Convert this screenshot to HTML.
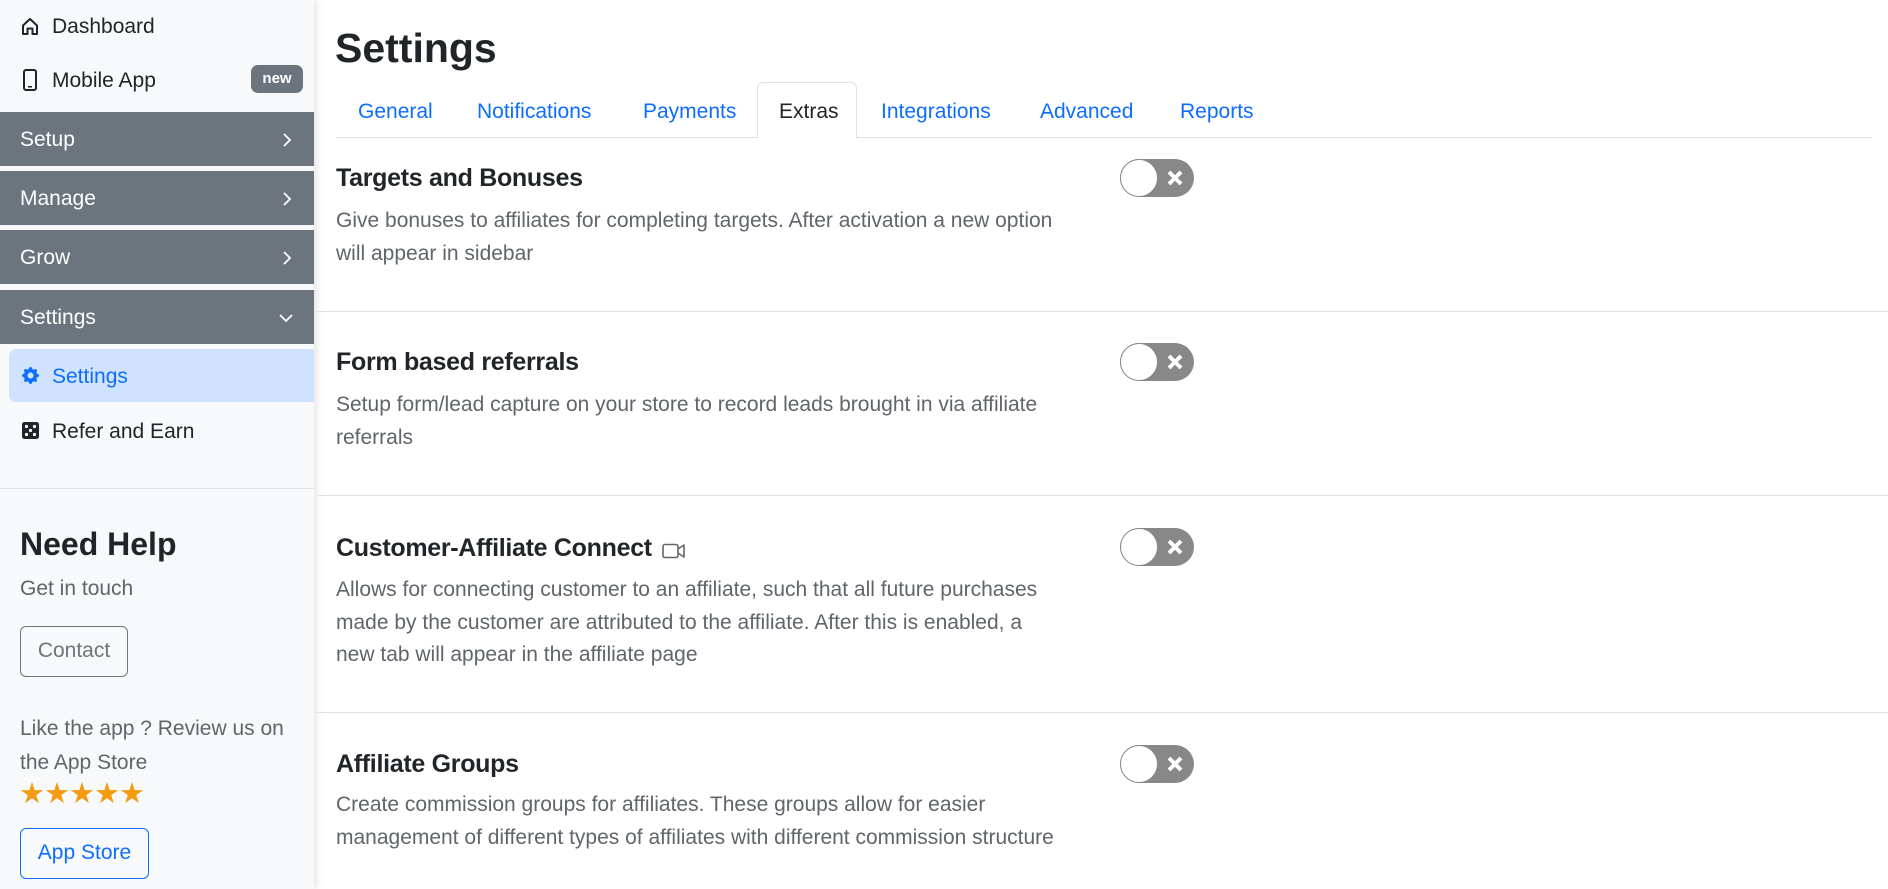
<!DOCTYPE html>
<html><head><meta charset="utf-8"><style>
*{margin:0;padding:0;box-sizing:border-box}
body{width:1888px;height:889px;overflow:hidden;background:#fff;font-family:"Liberation Sans",sans-serif;position:relative;color:#212529}
.a{position:absolute;white-space:nowrap}
#sb{position:absolute;left:0;top:0;width:314px;height:889px;background:#f8f9fa;box-shadow:2px 0 8px rgba(0,0,0,.12)}
.bar{position:absolute;left:0;width:314px;height:54px;background:#6c757d;color:#fff;font-size:21px;line-height:56px;padding-left:20px}
.bar svg{position:absolute;right:22px;top:20px}
.nav{font-size:21px;color:#212529}
.tab{position:absolute;top:100px;font-size:21px;color:#0d6efd}
.t{position:absolute;left:336px;font-size:25px;font-weight:bold;color:#212529;letter-spacing:-0.3px}
.d{position:absolute;left:336px;width:724px;font-size:21px;line-height:32.5px;color:#60656b}
.hr{position:absolute;left:317px;right:0;height:1px;background:#dee2e6}
.tg{position:absolute;left:1120px;width:74px;height:38px;border-radius:19px;background:#888}
.tg:before{content:"";position:absolute;left:0;top:0;width:38px;height:38px;border-radius:50%;background:#fff;border:1.5px solid #8a8a8a;box-sizing:border-box}
.tg svg{position:absolute;left:46px;top:11px}
</style></head><body>
<div id="sb">
 <svg class="a" style="left:21px;top:17px" width="18" height="19" viewBox="0 0 18 19"><path d="M2 8.5L9 2l7 6.5V17H11.5v-5.5h-5V17H2z" fill="none" stroke="#212529" stroke-width="2" stroke-linejoin="round"/></svg>
 <div class="a nav" style="left:52px;top:15px">Dashboard</div>
 <svg class="a" style="left:23px;top:69px" width="14" height="22" viewBox="0 0 14 22"><rect x="1" y="1" width="12" height="20" rx="2" fill="none" stroke="#212529" stroke-width="2"/><rect x="5" y="17" width="4" height="1.5" fill="#212529"/></svg>
 <div class="a nav" style="left:52px;top:69px">Mobile App</div>
 <div class="a" style="left:251px;top:65px;width:52px;height:28px;border-radius:7px;background:#6c757d;color:#fff;font-size:15px;font-weight:bold;text-align:center;line-height:28px">new</div>
 <div class="bar" style="top:112px">Setup<svg width="10" height="16" viewBox="0 0 10 16"><path d="M2 2l6 6-6 6" fill="none" stroke="#fff" stroke-width="1.8"/></svg></div>
 <div class="bar" style="top:171px">Manage<svg width="10" height="16" viewBox="0 0 10 16"><path d="M2 2l6 6-6 6" fill="none" stroke="#fff" stroke-width="1.8"/></svg></div>
 <div class="bar" style="top:230px">Grow<svg width="10" height="16" viewBox="0 0 10 16"><path d="M2 2l6 6-6 6" fill="none" stroke="#fff" stroke-width="1.8"/></svg></div>
 <div class="bar" style="top:290px">Settings<svg width="16" height="10" viewBox="0 0 16 10" style="right:20px;top:23px"><path d="M2 2l6 6 6-6" fill="none" stroke="#fff" stroke-width="1.8"/></svg></div>
 <div class="a" style="left:9px;top:349px;width:305px;height:53px;background:#cfe2ff;border-radius:7px 0 0 7px"></div>
 <svg class="a" style="left:22px;top:367px" width="17" height="17" viewBox="0 0 16 16"><path fill="#0d6efd" d="M9.4 1.1c-.4-1.4-2.4-1.4-2.8 0l-.1.3a1.5 1.5 0 0 1-2.1.9l-.3-.2c-1.3-.7-2.700.7-2 2l.2.3a1.5 1.5 0 0 1-.9 2.1l-.3.1c-1.4.4-1.4 2.4 0 2.800l.3.1a1.5 1.5 0 0 1 .9 2.1l-.2.3c-.7 1.3.7 2.7 2 2l.3-.2a1.5 1.5 0 0 1 2.1.9l.1.3c.4 1.4 2.4 1.4 2.8 0l.1-.3a1.5 1.5 0 0 1 2.1-.9l.3.2c1.3.7 2.7-.7 2-2l-.2-.3a1.5 1.5 0 0 1 .9-2.1l.3-.1c1.4-.4 1.4-2.4 0-2.8l-.3-.1a1.5 1.5 0 0 1-.9-2.1l.2-.3c.7-1.3-.7-2.7-2-2l-.3.2a1.5 1.5 0 0 1-2.1-.9zM8 10.9a2.9 2.9 0 1 1 0-5.8 2.9 2.9 0 0 1 0 5.8z"/></svg>
 <div class="a" style="left:52px;top:365px;font-size:21px;color:#0d6efd">Settings</div>
 <svg class="a" style="left:22px;top:422px" width="17" height="17" viewBox="0 0 17 17"><rect width="17" height="17" rx="2.5" fill="#212529"/><circle cx="4.5" cy="4.5" r="1.6" fill="#fff"/><circle cx="12.5" cy="4.5" r="1.6" fill="#fff"/><circle cx="8.5" cy="8.5" r="1.6" fill="#fff"/><circle cx="4.5" cy="12.5" r="1.6" fill="#fff"/><circle cx="12.5" cy="12.5" r="1.6" fill="#fff"/></svg>
 <div class="a nav" style="left:52px;top:420px">Refer and Earn</div>
 <div class="a" style="left:0;top:488px;width:314px;height:1px;background:#dee2e6"></div>
 <div class="a" style="left:20px;top:526px;font-size:32px;font-weight:bold;color:#212529">Need Help</div>
 <div class="a" style="left:20px;top:577px;font-size:21px;color:#60656b">Get in touch</div>
 <div class="a" style="left:20px;top:626px;width:108px;height:51px;border:1.5px solid #6c757d;border-radius:6px;font-size:21px;color:#6c757d;text-align:center;line-height:48px">Contact</div>
 <div class="a" style="left:20px;top:712px;font-size:21px;line-height:34px;color:#60656b">Like the app ? Review us on<br>the App Store</div>
 <div class="a" style="left:19px;top:776px;font-size:29px;color:#f39c12;letter-spacing:-1px">★★★★★</div>
 <div class="a" style="left:20px;top:828px;width:129px;height:51px;border:1.5px solid #0d6efd;border-radius:6px;font-size:21px;color:#0d6efd;text-align:center;line-height:48px">App Store</div>
</div>

<div class="a" style="left:335px;top:25px;font-size:41px;font-weight:bold;color:#212529">Settings</div>
<div class="a" style="left:336px;top:137px;width:1536px;height:1px;background:#dee2e6"></div>
<div class="a" style="left:757px;top:82px;width:100px;height:56px;border:1px solid #dee2e6;border-bottom:none;border-radius:6px 6px 0 0;background:#fff"></div>
<div class="tab" style="left:358px">General</div>
<div class="tab" style="left:477px">Notifications</div>
<div class="tab" style="left:643px">Payments</div>
<div class="tab" style="left:779px;color:#212529">Extras</div>
<div class="tab" style="left:881px">Integrations</div>
<div class="tab" style="left:1040px">Advanced</div>
<div class="tab" style="left:1180px">Reports</div>

<div class="t" style="top:164px">Targets and Bonuses</div>
<div class="d" style="top:205px">Give bonuses to affiliates for completing targets. After activation a new option will appear in sidebar</div>
<div class="tg" style="top:159px"><svg width="18" height="16" viewBox="0 0 18 16"><path d="M3 2l12 12M15 2L3 14" stroke="#fff" stroke-width="4"/></svg></div>
<div class="hr" style="top:311px"></div>

<div class="t" style="top:348px">Form based referrals</div>
<div class="d" style="top:389px">Setup form/lead capture on your store to record leads brought in via affiliate referrals</div>
<div class="tg" style="top:343px"><svg width="18" height="16" viewBox="0 0 18 16"><path d="M3 2l12 12M15 2L3 14" stroke="#fff" stroke-width="4"/></svg></div>
<div class="hr" style="top:495px"></div>

<div class="t" style="top:534px">Customer-Affiliate Connect <svg style="vertical-align:-3px;margin-left:4px" width="24" height="16" viewBox="0 0 24 16"><rect x="1" y="1.5" width="15" height="13" rx="2" fill="none" stroke="#666" stroke-width="1.6"/><path d="M16 6l6-4v12l-6-4" fill="none" stroke="#666" stroke-width="1.6" stroke-linejoin="round"/></svg></div>
<div class="d" style="top:574px">Allows for connecting customer to an affiliate, such that all future purchases made by the customer are attributed to the affiliate. After this is enabled, a new tab will appear in the affiliate page</div>
<div class="tg" style="top:528px"><svg width="18" height="16" viewBox="0 0 18 16"><path d="M3 2l12 12M15 2L3 14" stroke="#fff" stroke-width="4"/></svg></div>
<div class="hr" style="top:712px"></div>

<div class="t" style="top:750px">Affiliate Groups</div>
<div class="d" style="top:789px">Create commission groups for affiliates. These groups allow for easier management of different types of affiliates with different commission structure</div>
<div class="tg" style="top:745px"><svg width="18" height="16" viewBox="0 0 18 16"><path d="M3 2l12 12M15 2L3 14" stroke="#fff" stroke-width="4"/></svg></div>
</body></html>
